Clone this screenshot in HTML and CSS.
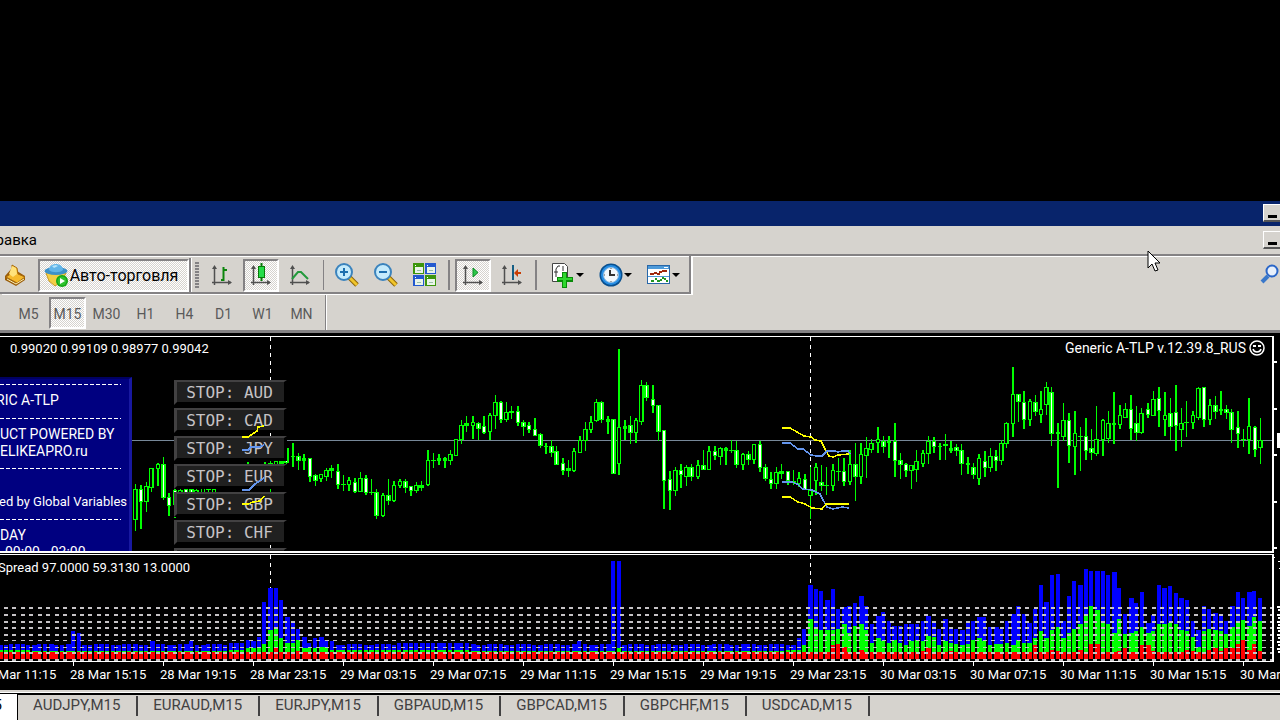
FILE: index.html
```html
<!DOCTYPE html>
<html lang="ru">
<head>
<meta charset="utf-8">
<title>Generic A-TLP</title>
<link rel="stylesheet" href="styles.css">
</head>
<body>
<div class="desktop"></div>
<div class="terminal">
  <header class="titlebar"><button class="win-btn" aria-label="Свернуть"></button></header>
  <nav class="menubar">
    <div class="menu-clip"><button class="menu-item">Справка</button></div>
    <button class="win-btn" aria-label="Свернуть окно графика"></button>
  </nav>
  <div class="toolrow">
    <div class="toolbar">
      <button class="tool book" aria-label="Редактор"><svg width="24" height="24" viewBox="0 0 24 24"><path d="M1 13 8 5l13 8v4l-9 6-11-6z" fill="#9a5c08"/><path d="M8 2l5 3 1 6 7 3-8 6-11-6 6-4z" fill="#f5b92d" stroke="#a86a0c"/><path d="M8 3l4 2 1 6-4 3-4-3z" fill="#ffe27c"/><path d="M3 16l9 5 8-5" stroke="#fff3b8" fill="none"/></svg></button>
      <button class="tool auto pressed"><svg width="24" height="24" viewBox="0 0 24 24"><path d="M2 10h20l-4 8-7 5-6-5z" fill="#f2ce45" stroke="#c99a22"/><ellipse cx="12" cy="8" rx="11.500" ry="4" fill="#3c91c9"/><path d="M5 7c0-8 14-8 14 0-3 3-11 3-14 0z" fill="#62b5e8"/><path d="M8 3l4-1 2 1-4 2z" fill="#b5e5fb"/><circle cx="18" cy="18" r="6" fill="#12a512"/><circle cx="18" cy="18" r="4.500" fill="#2ec22e"/><path d="M16 15l5 3-5 3z" fill="#fff"/></svg><span>Авто-торговля</span></button>
      <i class="edge"></i><i class="grip"></i>
      <button class="tool" aria-label="Бары"><svg width="24" height="24" viewBox="0 0 24 24"><use href="#axes"/><path d="M13.500 4v14M11 17h2M14 7h3" stroke="#0c850c" stroke-width="2" fill="none"/></svg></button>
      <button class="tool pressed" aria-label="Свечи"><svg width="24" height="24" viewBox="0 0 24 24"><use href="#axes"/><path d="M12.500 0v18" stroke="#087808" stroke-width="2"/><rect x="9.500" y="3.500" width="6" height="11" fill="#25dc48" stroke="#087808"/></svg></button>
      <button class="tool" aria-label="Линия"><svg width="24" height="24" viewBox="0 0 24 24"><use href="#axes"/><path d="M4 16l6-7h3l7 7" stroke="#239a3c" stroke-width="2" fill="none"/></svg></button>
      <i class="sep"></i>
      <button class="tool" aria-label="Увеличить"><svg width="24" height="24" viewBox="0 0 24 24"><use href="#lens"/><path d="M5 9h8M9 5v8" stroke="#1d6fae" stroke-width="2"/></svg></button>
      <button class="tool" aria-label="Уменьшить"><svg width="24" height="24" viewBox="0 0 24 24"><use href="#lens"/><path d="M5 9h8" stroke="#1d6fae" stroke-width="2"/></svg></button>
      <button class="tool" aria-label="Окна рядом"><svg width="24" height="24" viewBox="0 0 24 24" shape-rendering="crispEdges"><path d="M0 0h11v11H0zM12 12h11v11H12z" fill="#3c960c"/><path d="M12 0h11v11H12zM0 12h11v11H0z" fill="#2359cf"/><path d="M2 4h8v6H2zM14 4h8v6h-8zM2 16h8v6H2zM14 16h8v6h-8z" fill="#eaf5ea"/><path d="M2 2h1M14 2h1M2 14h1M14 14h1" stroke="#fff"/><path d="M4 7h4M16 7h4M4 19h4M16 19h4" stroke="#9cc0a8"/></svg></button>
      <i class="sep wide"></i>
      <button class="tool pressed" aria-label="Автопрокрутка"><svg width="24" height="24" viewBox="0 0 24 24"><use href="#axes"/><path d="M12 5v9l5-4.500z" fill="#2ac748" stroke="#0d8d24"/></svg></button>
      <button class="tool" aria-label="Сдвиг графика"><svg width="24" height="24" viewBox="0 0 24 24"><use href="#axes"/><path d="M13 2v15" stroke="#155e84" stroke-width="2"/><path d="M14 10l4-4v3h3v2h-3v3z" fill="#c83d04"/></svg></button>
      <i class="sep wide"></i>
      <button class="tool drop" aria-label="Индикаторы"><svg width="24" height="26" viewBox="0 0 24 26"><path d="M1.500 1.500h12l3 3v15h-15z" fill="#fff" stroke="#444"/><path d="M5 15V7l2-3h2M3 10h4M12 4v5" stroke="#333" fill="none"/><path d="M11 10h5v5h6v5h-6v6h-5v-6H6v-5h5z" fill="#098a09"/><path d="M12 11h3v5h6v2h-6v7h-3v-7H7v-2h5z" fill="#2ed72e"/></svg><i class="caret"></i></button>
      <button class="tool drop" aria-label="Периоды"><svg width="24" height="24" viewBox="0 0 24 24"><circle cx="12" cy="12" r="11.500" fill="#084f8f"/><circle cx="12" cy="12" r="10" fill="#288fe5"/><circle cx="12" cy="12" r="7.500" fill="#f3f8fc" stroke="#93bee2"/><path d="M11 7v5h5" stroke="#333" stroke-width="2" fill="none"/><path d="M12 5v1M12 18v1M5 12h1M18 12h1" stroke="#555"/></svg><i class="caret"></i></button>
      <button class="tool drop" aria-label="Шаблоны"><svg width="24" height="22" viewBox="0 0 24 22" shape-rendering="crispEdges"><rect x=".500" y="1.500" width="22" height="18" fill="#fff" stroke="#2867a8"/><path d="M1 2h21v3H1z" fill="#4e9ad9"/><path d="M17 3h4" stroke="#fff"/><path d="M3 10h4M7 9h3M10 10h3M12 8h3M15 7h5" stroke="#9e280d" stroke-width="2" fill="none"/><path d="M1 12h21" stroke="#4e9ad9"/><path d="M4 17h3M8 15h2M10 17h3M13 16h2M15 14h2M17 15h2M19 17h2" stroke="#219421" stroke-width="2" fill="none"/></svg><i class="caret"></i></button>
    </div>
    <button class="tool search" aria-label="Поиск"><svg width="20" height="20" viewBox="0 0 20 20"><path d="M2 18l6-6" stroke="#3a78ca" stroke-width="4"/><circle cx="12" cy="7" r="5.500" fill="#e8f0fb" stroke="#2a66c8" stroke-width="2"/></svg></button>
  </div>
  <div class="periods">
    <div class="periodbar">
      <button>M5</button><button class="pressed">M15</button><button>M30</button><button>H1</button><button>H4</button><button>D1</button><button>W1</button><button>MN</button>
    </div>
  </div>
  <main class="chart">
    <section class="pane price">
      <svg class="plot" id="price"></svg>
      <div class="infopanel">
        <hr><p>RIC A-TLP</p><hr><p class="tall">UCT POWERED BY<br>ELIKEAPRO.ru</p><hr><p class="gap">ed by Global Variables</p><hr><p class="tall">DAY<br><span class="hours">00:00 - 03:00</span></p>
      </div>
      <div class="stops">
        <button>STOP: AUD</button><button>STOP: CAD</button><button>STOP: JPY</button><button>STOP: EUR</button><button>STOP: GBP</button><button>STOP: CHF</button><button>STOP: NZD</button>
      </div>
      <svg class="plot over" id="averages"></svg>
      <div class="caption"><span class="ohlc">0.99020 0.99109 0.98977 0.99042</span><span class="expert">Generic A-TLP v.12.39.8_RUS</span><svg width="16" height="16" viewBox="0 0 16 16"><circle cx="8" cy="8" r="7" fill="none" stroke="#fff" stroke-width="1.500"/><path d="M4 5h3v2H4zM9 5h3v2H9z" fill="#fff"/><path d="M4 9c1 4 7 4 8 0" stroke="#fff" stroke-width="1.500" fill="none"/></svg></div>
    </section>
    <svg class="scale" id="pricescale"></svg>
    <section class="pane spread">
      <svg class="plot" id="spread"></svg>
      <div class="caption sub">Spread 97.0000 59.3130 13.0000</div>
    </section>
    <svg class="scale" id="spreadscale"></svg>
    <div class="timeaxis" id="timeaxis"></div>
  </main>
  <footer class="tabs">
    <button class="active">M15</button><button>AUDJPY,M15</button><button>EURAUD,M15</button><button>EURJPY,M15</button><button>GBPAUD,M15</button><button>GBPCAD,M15</button><button>GBPCHF,M15</button><button>USDCAD,M15</button>
  </footer>
</div>
<svg class="cursor" width="14" height="23" viewBox="0 0 14 23"><path d="M1 1v17l4-4 3 7 3-1-3-7h5z" fill="#fff" stroke="#000"/></svg>
<svg class="defs" width="0" height="0">
  <symbol id="axes" viewBox="0 0 24 24"><path d="M4.500 4v18M2 19.500h19" stroke="#505050" stroke-width="1.500"/><path d="M2 6l2.500-4L7 6zM18 17l4 2.500-4 2.500z" fill="#505050"/></symbol>
  <symbol id="lens" viewBox="0 0 24 24"><path d="M14 14l8 8" stroke="#8c6408" stroke-width="5"/><path d="M14 14l8 8" stroke="#f0c52c" stroke-width="3"/><circle cx="9" cy="9" r="8" fill="#c5ebfc" stroke="#3b83bd" stroke-width="2"/></symbol>
</svg>
<script src="chart.js"></script>
</body>
</html>
```
FILE: styles.css
```css
* { box-sizing: border-box; }
body { margin: 0; background: #000; overflow: hidden; font: 13px/17px Roboto, "Liberation Sans", sans-serif; color: #000; position: relative; }
button { font: inherit; color: inherit; background: none; border: 0; padding: 0; margin: 0; }
.desktop { height: 201px; }
.defs { position: absolute; }
.titlebar { height: 25px; background: #08246b; display: flex; justify-content: flex-end; align-items: center; padding-bottom: 1px; overflow: hidden; }
.win-btn { width: 22px; height: 18px; margin-right: -5px; flex: none; background: #d6d3ce; border: 1px solid #fff; border-bottom: 2px solid #555; display: flex; align-items: flex-end; padding: 0 0 2px 4px; }
.win-btn::before { content: ""; width: 9px; height: 3px; background: #000; }
.menubar { height: 28px; background: #d6d3ce; display: flex; justify-content: space-between; align-items: center; overflow: hidden; }
.menu-clip { width: 37px; padding-top: 1px; display: flex; justify-content: flex-end; overflow: hidden; }
.menu-item { font-size: 15px; }
.toolrow { height: 41px; background: #d6d3ce; border-top: 2px solid #848284; box-shadow: inset 0 1px #fff; display: flex; justify-content: space-between; }
.toolbar { display: flex; align-items: center; gap: 3px; border-right: 2px solid #848284; border-bottom: 2px solid #848284; box-shadow: 2px 1px #fff; padding-right: 6px; height: 38px; padding-top: 2px; }
.tool { width: 36px; height: 33px; display: flex; align-items: center; justify-content: center; }
.tool svg { flex: none; }
.pressed { background: repeating-conic-gradient(#fff 0 25%, #d6d3ce 0 50%) 0 0 / 2px 2px; border: 2px solid #fff; border-top-color: #848284; border-left-color: #848284; }
.book { width: 31px; }
.auto { width: 151px; margin-left: 4px; font-size: 16px; gap: 2px; padding-right: 5px; white-space: nowrap; }
.edge { width: 3px; align-self: stretch; background: #848284; border-right: 1px solid #fff; margin-left: -3px; }
.grip { width: 4px; height: 27px; background: repeating-linear-gradient(#848284 0 2px, #d6d3ce 2px 3px); margin-right: 2px; }
.sep { width: 1px; height: 30px; background: #848284; margin: 0 2px; }
.sep.wide { width: 2px; }
.drop { width: 40px; gap: 1px; margin-left: 5px; }
.caret { border: 4px solid transparent; border-top-color: #000; border-bottom: 0; }
.search { width: 20px; margin-top: 1px; }
.periods { height: 35px; background: #d6d3ce; }
.periodbar { width: 327px; height: 35px; padding: 2px 0 1px 10px; display: flex; gap: 2px; border-right: 1px solid #fff; box-shadow: inset -1px 0 #848284; }
.periodbar button { width: 37px; padding-top: 2px; font-size: 14px; color: #5a5a5a; }
.chart { border-top: 3px solid #848284; padding-top: 3px; background: #000; color: #fff; display: grid; grid-template-columns: 1fr 6px; grid-template-rows: 218px 108px 28px; overflow: hidden; }
.pane { position: relative; border: 1px solid #fff; border-left: 0; border-right-width: 2px; overflow: hidden; min-width: 0; }
.price { border-bottom-width: 2px; margin-bottom: 1px; }
.plot { position: absolute; top: 0; left: 0; width: 100%; height: 100%; }
.plot.over { pointer-events: none; }
.scale { width: 6px; height: 100%; }
.caption { position: absolute; top: 3px; left: 10px; right: 7px; display: flex; gap: 3px; }
.caption .ohlc { flex: 1; }
.expert { font-size: 14px; }
.caption.sub { left: -2px; top: 4px; }
.infopanel { position: absolute; left: 0; top: 40px; width: 132px; height: 180px; background: #000080; border-right: 3px solid #1818a0; border-top: 2px solid #000060; padding-top: 5px; font-size: 14px; line-height: 17px; white-space: nowrap; }
.infopanel hr { border: 0; height: 1px; margin: 0 8px 0 0; background: repeating-linear-gradient(90deg, #fff 0 4px, #000080 4px 6px); }
.infopanel p { margin: 7px 0 9px -4px; }
.infopanel .tall { margin: 7px 0 8px; }
.infopanel .gap { margin: 24px 0 9px -1px; font-size: 13px; }
.hours { padding-left: 5px; }
.stops { position: absolute; left: 174px; top: 43px; display: flex; flex-direction: column; gap: 3px; font: 16px/20px "DejaVu Sans Mono", monospace; }
.stops button { width: 113px; height: 25px; background: #202020; color: #c6c3c6; border-top: 2px solid #424142; border-left: 3px solid #424142; border-right: 3px solid #000; border-bottom: 3px solid #000; white-space: nowrap; padding: 1px 2px 0 0; line-height: 19px; }
.timeaxis { grid-column: 1 / -1; display: flex; height: 28px; margin-left: -20px; overflow: hidden; font-size: 13px; }
.timeaxis span { flex: 0 0 90px; padding-top: 4px; background: linear-gradient(#fff, #fff) 3px 0 / 1px 4px no-repeat; }
.tabs { display: flex; height: 30px; background: #d6d3ce; border-top: 2px solid #d6d3ce; box-shadow: inset 0 1px #fff, inset 0 3px #000; color: #424142; padding-top: 4px; font-size: 15px; overflow: hidden; }
.tabs button { flex: none; padding: 0 15px 1px; height: 20px; border-right: 2px solid #424142; }
.tabs button + button { padding-right: 16px; }
.tabs .active { width: 18px; height: 28px; margin-top: -2px; padding: 0 15px 4px 0; background: #fff; color: #000; display: flex; justify-content: flex-end; align-items: center; overflow: hidden; border-right: 1px solid #000; border-bottom: 1px solid #000; }
.cursor { position: absolute; right: 119px; top: 250px; }
```
FILE: chart.js
```js
// Candles from the first visible bar: high, body top, body bottom, low.
// "u" is a hollow rising bar, "d" a filled falling bar.
const BAR = 5.625, ORIGIN = 270;
const candles = `484 489 520 531 u,485 489 502 529 d,482 486 502 512 u,468 468 488 492 u,463 464 469 486 u,457 464 498 500 d,493 497 506 516 d,488 490 505 518 d,488 490 500 506 u,486 489 494 500 d,485 489 493 496 d,486 490 494 498 u,484 488 494 500 u,480 484 490 494 d,488 489 493 496 u,465 467 476 484 u,465 467 468 470 d,465 467 468 470 u,465 467 472 478 d,465 468 474 480 u,462 465 468 474 u,465 466 470 474 d,465 466 472 474 d,462 466 467 471 u,461 463 465 516 d,460 461 466 470 u,460 461 464 468 d,
446 448 463 468 d,443 456 457 467 d,453 456 461 470 d,454 458 461 470 d,458 458 477 482 d,474 475 481 486 d,474 474 479 482 u,468 470 477 481 u,465 468 471 478 d,464 471 485 489 d,475 484 485 491 d,477 480 485 491 u,478 482 492 493 d,472 478 492 492 u,475 478 493 495 d,479 492 493 495 d,489 492 516 519 d,493 495 516 517 u,479 495 501 505 d,481 485 501 502 u,479 481 486 488 u,479 481 488 493 d,486 486 491 496 d,482 485 491 493 u,481 485 488 491 d,450 460 485 486 u,453 460 461 468 d,454 458 461 465 d,457 458 461 468 d,450 454 461 465 u,439 439 456 456 u,420 425 440 444 u,416 423 426 432 d,416 422 426 439 u,422 423 429 440 d,416 426 433 434 d,413 415 432 440 u,395 402 416 429 u,401 402 420 423 d,402 412 420 422 u,406 411 413 419 d,406 411 423 426 d,420 422 427 436 d,422 425 430 433 d,418 429 436 436 d,433 434 446 448 d,443 446 447 454 d,440 446 453 457 d,446 451 465 465 d,
458 463 471 475 d,460 468 471 477 d,448 451 471 472 u,436 440 453 453 u,422 429 441 451 u,416 422 430 433 u,399 402 421 422 u,401 402 420 423 d,416 419 422 434 d,419 419 474 474 d,349 427 464 475 u,420 426 429 440 d,416 425 433 444 d,418 420 433 443 u,380 385 422 425 u,382 385 398 401 d,385 399 406 413 d,405 405 432 441 d,430 430 481 509 d,471 479 491 510 d,467 470 491 496 u,464 470 475 488 d,465 467 477 486 u,464 467 477 481 d,460 465 477 479 u,450 465 470 470 d,446 451 470 470 u,446 451 456 460 d,447 448 457 465 u,447 448 451 465 d,440 450 451 453 d,441 450 465 468 d,453 454 465 470 u,451 454 460 465 d,444 444 460 464 u,441 444 468 472 d,464 467 479 481 d,472 479 484 489 d,467 472 484 489 u,464 471 474 479 d,471 471 481 485 d,470 481 483 485 d,
472 478 484 487 u,474 479 490 490 d,467 490 496 519 u,463 467 481 495 u,465 482 486 491 d,467 485 486 495 d,464 470 486 491 u,458 471 472 481 d,458 471 482 486 d,450 464 482 485 u,443 464 477 501 d,443 454 477 484 u,437 448 456 478 u,439 443 450 453 u,427 439 443 453 u,436 441 447 453 d,436 441 443 458 d,423 441 461 477 d,453 460 465 479 d,463 464 471 477 d,465 465 471 489 u,450 461 470 482 u,450 453 464 467 u,436 441 454 464 u,437 441 447 453 d,443 446 447 460 d,434 444 446 460 d,441 448 451 453 d,444 447 451 456 d,444 450 464 475 d,457 463 465 474 d,463 467 475 479 d,454 458 479 485 u,451 461 468 477 d,448 456 468 472 u,450 456 461 471 d,440 443 461 465 u,422 423 444 448 u,367 394 424 437 u,
394 394 402 422 d,391 402 420 429 d,399 401 420 426 u,395 402 412 416 d,391 409 415 423 u,382 387 405 415 u,387 392 434 446 d,423 432 434 488 d,403 420 437 441 u,413 420 446 463 d,411 433 447 475 u,427 436 437 471 d,418 436 451 460 d,429 448 453 460 d,406 439 454 456 u,419 420 440 456 u,411 423 439 443 u,392 423 425 444 d,405 415 425 429 u,403 409 418 418 u,395 409 429 440 d,406 423 433 441 d,408 413 433 434 u,403 409 415 418 d,391 399 416 416 u,387 398 411 427 d,392 415 420 436 u,398 413 427 440 d,385 412 426 451 d,408 423 430 447 u,401 422 423 437 d,411 415 423 429 u,387 388 418 420 u,387 387 420 427 d,399 405 420 425 u,396 405 412 419 d,391 409 411 415 d,405 409 413 419 d,409 412 430 443 d,411 427 434 448 d,429 439 440 447 d,398 426 440 454 u,426 427 450 457 d,418 440 448 464 u`.split(",").map(s => s.trim().split(" "));

const rect = (x, y, w, h, fill) => `<rect x="${x}" y="${y}" width="${w}" height="${h}" fill="${fill}"/>`;
const dashes = x => `<path d="M${x + 0.5} 0V230" stroke="#fff" stroke-dasharray="4 4"/>`;

// Price pane: its content begins at 337 on the quote grid.
let out = dashes(270) + dashes(810) + `<path d="M0 103.500H4000" stroke="#778899"/>`;
candles.forEach((c, i) => {
  const wide = [1, 4, 6, 7].includes(i % 8);
  const x = Math.floor(ORIGIN + (i - 24) * BAR);
  const wick = wide ? 2 : 1, left = wide ? x - 1 : x - 2, body = wide ? 4 : 5;
  const [hi, top, bot, lo] = c.slice(0, 4).map(v => v - 337);
  const h = Math.max(bot - top, 1);
  out += rect(x, hi, wick, lo - hi, "#0f0") + rect(left, top, body, h, "#0f0");
  if (h > 3) out += c[4] === "u" ? rect(left + 1, top + 1, 2, h - 2, "#000") : rect(x, top + 1, wick, h - 2, "#fff");
});
document.getElementById("price").innerHTML = `<g shape-rendering="crispEdges">${out}</g>`;

const lines = [
  ["#ff0", "782,428 790,428 804,436 811,437 815,440 821,441 825,449 829,456 833,457 838,455 849,454"],
  ["#6495ed", "782,443 790,443 798,449 803,449 811,455 817,456 822,456 827,451 835,451 838,452 842,451 848,451 850,454"],
  ["#6495ed", "782,482 792,482 797,484 803,489 812,490 820,494 823,500 827,507 833,509 842,507 849,508"],
  ["#ff0", "782,497 790,497 798,502 805,504 812,508 822,509 826,504 849,504"],
  ["#ff0", "242,437 248,437 257,431 258,427 264,426"],
  ["#6495ed", "242,450 248,450 251,447 260,447 264,445"],
  ["#6495ed", "242,490 249,490 255,484 264,478"],
  ["#ff0", "242,504 248,504 253,502 260,501 264,496"]
];
document.getElementById("averages").innerHTML = `<g transform="translate(0,-337)" fill="none" stroke-width="1.500" shape-rendering="crispEdges">${lines.map(l => `<polyline stroke="${l[0]}" points="${l[1]}"/>`).join("")}</g>`;

// Spread histogram: tops of the blue, green and red parts by bar number.
const spread = {};
for (let k = -48; k < 96; k++) spread[k] = [644 + (k * k % 5 > 1 ? 1 : 0), (k < -42 || (k > 6 && k < 36)) ? 650 : 651, 652];
const put = (from, text) => text.split(",").forEach((s, i) => { const v = s.split(" ").map(Number); spread[from + i] = [v[0], v[1], v[2] || 652]; });
put(-35, "631 651,633 651");
put(-21, "641 651");
put(-14, "641 651");
put(-7, "643 650,643 650,643 650,640 648,641 648,637 648,602 644,588 630,588 629 648,600 638,617 643,623 643,629 640 651,637 648,643 648,638 648,637 647,640 647,641 650");
for (let k = 23; k < 36; k++) spread[k][0] = 643;
put(55, "641 651");
put(61, "561 651,561 648");
put(92, "645 650,645 650,638 650,629 645,585 619,589 629,591 630,600 630,589 630 645,609 629 644,607 624 647,606 633,603 626,596 624 650,606 630,624 643,616 638,612 641,621 643,626 640,626 643,624 645,624 641,624 640,621 641 651,616 636 648,623 637,629 645,619 641,629 643 651,629 644,630 645,622 644,621 640,617 638,617 641,627 645,627 644,629 644,621 643,614 645,606 640,614 643,623 643,609 638 645,585 631,602 638,575 630 650,574 627 651,621 638,596 633,581 629,585 624 650,569 615,571 606 644,571 610 644,571 621,575 624,572 633,588 619 651,614 634 648,598 633,603 631,592 627 645,623 633 645,615 631 651,585 624,588 624,586 623,593 624,598 630,600 631 650,621 637 651,630 647,606 631,609 629 650,613 630 648,615 631 651,621 634 648,606 627 648,592 621 644,598 620 640,592 626 650,591 617 644,598 621 651");

let bars = dashes(270) + dashes(810);
for (let k = -48; k <= 176; k++) {
  const [b, g, r] = spread[k].map(v => v - 555);
  const left = Math.round(ORIGIN + k * BAR) - 2, w = k % 3 === 0 ? 5 : 4;
  bars += rect(left, b, w, g - b, "#00f") + rect(left, g, w, r - g, "#0f0") + rect(left, r, w, 104 - r, "#f00");
}
[[607, 2], [614, 2], [621, 2], [627, 2], [634, 2], [640, 1], [647, 1], [652, 2], [659, 2]].forEach(([y, h]) => {
  bars += `<path d="M4 ${y - 555 + h / 2}H4000" stroke="#c6c3c6" stroke-width="${h}" stroke-dasharray="4 4.440"/>`;
});
document.getElementById("spread").innerHTML = `<g shape-rendering="crispEdges">${bars}</g>`;

document.getElementById("pricescale").innerHTML = [361, 408, 454, 501, 547].map(y => rect(0, y - 336, 3, 2, "#fff")).join("") + rect(3, 97, 3, 15, "#fff");
document.getElementById("spreadscale").innerHTML = rect(0, 3, 1, 1, "#fff") + rect(4, 7, 2, 1, "#fff") + rect(5, 14, 1, 1, "#fff") + [606, 614, 621, 627, 634, 641, 648].map(y => rect(3, y - 554, 3, 2, "#fff") + rect(4, y - 551, 2, 2, "#fff")).join("");

const times = ["28 Mar 11:15", "28 Mar 15:15", "28 Mar 19:15", "28 Mar 23:15", "29 Mar 03:15", "29 Mar 07:15", "29 Mar 11:15", "29 Mar 15:15", "29 Mar 19:15", "29 Mar 23:15", "30 Mar 03:15", "30 Mar 07:15", "30 Mar 11:15", "30 Mar 15:15", "30 Mar 19:15"];
document.getElementById("timeaxis").innerHTML = times.map(t => `<span>${t}</span>`).join("");
```
